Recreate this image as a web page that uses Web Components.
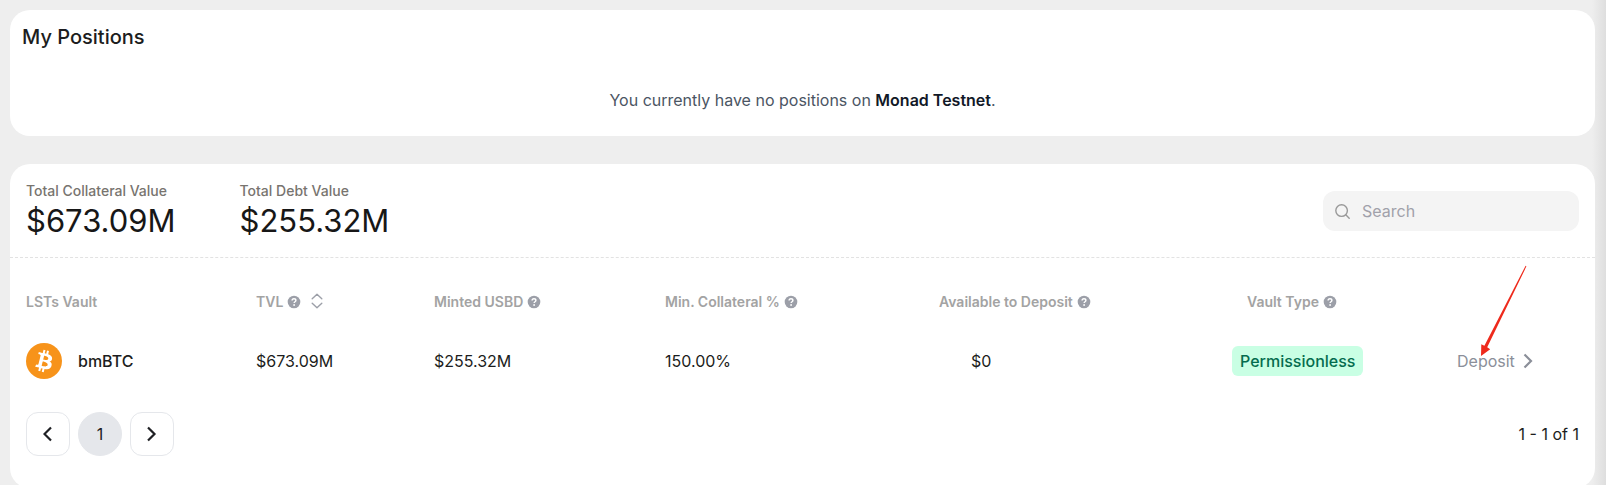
<!DOCTYPE html>
<html lang="en">
<head>
<meta charset="utf-8">
<title>My Positions</title>
<style>
html{background:#eee;scrollbar-width:none}
body{margin:0;font:400 16px/24px Inter,sans-serif;color:#1c1d20}
</style>
</head>
<body>
<vault-page></vault-page>

<script>
const define = (name, html) => {
  const template = document.createElement('template');
  template.innerHTML = html;
  customElements.define(name, class extends HTMLElement {
    constructor() {
      super();
      this.attachShadow({ mode: 'open' }).append(template.content.cloneNode(true));
    }
  });
};

define('surface-card', `
<style>
:host{display:block;background:#fff;border-radius:20px}
</style>
<slot></slot>`);

define('help-icon', `
<style>
:host{display:inline-block;width:14px;height:14px}
svg{display:block}
</style>
<svg width="14" height="14" viewBox="0 0 14 14" aria-hidden="true">
<circle cx="7" cy="7" r="6.3" fill="#9c9fa8"/>
<path d="M5.1 5.6C5.1 4.4 5.9 3.7 7 3.7S8.9 4.4 8.9 5.4C8.9 6.7 7.1 6.7 7.1 8" fill="none" stroke="#fff" stroke-width="1.4"/>
<circle cx="7.1" cy="10" r=".9" fill="#fff"/>
</svg>`);

define('sort-icon', `
<style>
:host{display:inline-block;width:12px;height:16px}
svg{display:block}
</style>
<svg width="12" height="16" viewBox="0 0 12 16" fill="none" stroke="#9c9fa8" stroke-width="1.4" stroke-linecap="round" stroke-linejoin="round" aria-hidden="true">
<path d="M1.2 5.8 6 1.3l4.8 4.5M1.2 10.2 6 14.7l4.8-4.5"/>
</svg>`);

define('column-label', `
<style>
:host{display:inline-flex;align-items:center;gap:4px;font:600 14px/20px Inter,sans-serif;color:#a3a3a3;white-space:nowrap}
</style>
<slot></slot>`);

define('bitcoin-logo', `
<style>
:host{display:block;width:36px;height:36px}
svg{display:block}
</style>
<svg width="36" height="36" viewBox="0 0 32 32" role="img" aria-label="Bitcoin">
<circle cx="16" cy="16" r="16" fill="#f7931a"/>
<path fill="#fff" d="M23.19 14.02c.31-2.1-1.28-3.23-3.47-3.98l.71-2.85-1.73-.43-.69 2.77c-.46-.11-.92-.22-1.39-.33l.7-2.79-1.73-.43-.71 2.84c-.38-.08-.75-.17-1.11-.26l-2.39-.6-.46 1.85s1.28.29 1.26.31c.7.18.83.64.8 1.01l-.8 3.24.18.06-.18-.05-1.13 4.54c-.09.21-.3.53-.79.41.02.02-1.26-.31-1.26-.31l-.86 1.98 2.25.56 1.23.32-.71 2.87 1.72.43.71-2.84c.48.13.93.25 1.38.36l-.71 2.82 1.73.43.71-2.86c2.96.56 5.18.33 6.12-2.34.75-2.15-.04-3.39-1.59-4.2 1.13-.26 1.98-1 2.21-2.53zm-3.96 5.55c-.53 2.16-4.16.99-5.34.7l.95-3.82c1.18.29 4.95.88 4.39 3.12zm.54-5.58c-.49 1.96-3.51.96-4.49.72l.87-3.46c.98.24 4.14.7 3.62 2.74z"/>
</svg>`);

define('metric-total', `
<style>
:host{display:block}
dl{margin:0}
dt{font:500 14px/20px Inter,sans-serif;color:#78746f}
dd{margin:0;font-size:31px;line-height:40px;color:#171717}
</style>
<dl><dt><slot name="label"></slot></dt><dd><slot></slot></dd></dl>`);

define('search-field', `
<style>
:host{display:block;width:256px}
label{display:flex;align-items:center;gap:12px;box-sizing:border-box;height:40px;padding:0 12px;border-radius:12px;background:#f4f4f4}
svg{flex:none}
input{flex:1;min-width:0;border:0;padding:0;background:none;outline:0;font:400 16px/24px Inter,sans-serif;color:#171717}
input::placeholder{color:#a1a1aa;opacity:1}
</style>
<label>
<svg width="15" height="15" viewBox="0 0 15 15" fill="none" stroke="#999" stroke-width="1.4" stroke-linecap="round" aria-hidden="true"><circle cx="6.6" cy="6.6" r="5.8"/><path d="m10.8 10.8 3.4 3.4"/></svg>
<input type="search" placeholder="Search" aria-label="Search">
</label>`);

define('status-badge', `
<style>
:host{display:inline-block;padding:3px 8px;border-radius:6px;background:#c9ffe4;color:#046c4e;font-weight:500}
</style>
<slot></slot>`);

define('pointer-arrow', `
<style>
:host{display:block;width:48px;height:92px;pointer-events:none}
svg{display:block}
</style>
<svg width="48" height="92" viewBox="0 0 48 92" aria-hidden="true">
<path fill="#ee2a1c" d="M46.6.8 47.4 1.3 8.2 82.2 11.2 84.2 2 91 2.3 79.2 5.4 80.7Z"/>
</svg>`);

define('vault-table', `
<style>
:host{display:block}
table{width:100%;table-layout:fixed;border-collapse:collapse}
th,td{padding:0;text-align:left;vertical-align:middle;font-weight:400;white-space:nowrap}
th{height:48px}
td{height:72px}
.free{padding-left:32px}
.type{padding-left:15px}
.vault{display:flex;align-items:center;gap:16px;font-weight:500}
.action{position:relative}
pointer-arrow{position:absolute;right:53px;top:-60px}
a{display:inline-flex;align-items:center;gap:8px;color:#8b8f99;text-decoration:none}
button{display:block;border:0;margin:0 0 0 6px;padding:0;background:none}
</style>
<table>
<colgroup><col style="width:230px"><col style="width:178px"><col style="width:231px"><col style="width:274px"><col style="width:293px"><col style="width:225px"><col style="width:123px"></colgroup>
<thead><tr>
<th scope="col"><column-label>LSTs Vault</column-label></th>
<th scope="col"><column-label>TVL <help-icon></help-icon><button type="button" aria-label="Sort by TVL"><sort-icon></sort-icon></button></column-label></th>
<th scope="col"><column-label>Minted USBD <help-icon></help-icon></column-label></th>
<th scope="col"><column-label>Min. Collateral % <help-icon></help-icon></column-label></th>
<th scope="col"><column-label>Available to Deposit <help-icon></help-icon></column-label></th>
<th scope="col" class="type"><column-label>Vault Type <help-icon></help-icon></column-label></th>
<th></th>
</tr></thead>
<tbody><tr>
<td><div class="vault"><bitcoin-logo></bitcoin-logo>bmBTC</div></td>
<td>$673.09M</td>
<td>$255.32M</td>
<td>150.00%</td>
<td class="free">$0</td>
<td><status-badge>Permissionless</status-badge></td>
<td class="action"><a href="#deposit">Deposit <svg width="10" height="16" viewBox="0 0 10 16" fill="none" stroke="#8b8f99" stroke-width="2.2" aria-hidden="true"><path d="m1.5 1.5 6.5 6.5-6.5 6.5"/></svg></a><pointer-arrow></pointer-arrow></td>
</tr></tbody>
</table>`);

define('page-nav', `
<style>
:host{display:flex;align-items:center;justify-content:space-between}
nav{display:flex;gap:8px}
button{display:grid;place-items:center;box-sizing:border-box;width:44px;height:44px;padding:0;border:1px solid #e5e7eb;border-radius:12px;background:#fff;font:400 16px/24px Inter,sans-serif;color:#1f2024}
button[aria-current]{border-radius:50%;background:#e5e7eb}
</style>
<nav aria-label="Pages">
<button type="button" aria-label="Previous page"><svg width="10" height="16" viewBox="0 0 10 16" fill="none" stroke="#1f2024" stroke-width="2.2" aria-hidden="true"><path d="M8 1.5 1.5 8 8 14.5"/></svg></button>
<button type="button" aria-current="page">1</button>
<button type="button" aria-label="Next page"><svg width="10" height="16" viewBox="0 0 10 16" fill="none" stroke="#1f2024" stroke-width="2.2" aria-hidden="true"><path d="m1 1.5 6.5 6.5L1 14.5"/></svg></button>
</nav>
<span>1 - 1 of 1</span>`);

define('vault-page', `
<style>
:host{display:flex;flex-direction:column;gap:28px;padding:10px 11px 0 10px;background:linear-gradient(to left,#dedede,#eee 14px)}
.positions{padding:15px 12px 24px}
h1{margin:0;font:500 20px/24px Inter,sans-serif}
p{margin:39px 0 0;text-align:center;color:#4b5563}
p strong{font-weight:600;color:#111827}
.totals{display:flex;align-items:center;gap:64px;padding:17px 16px 16px;border-bottom:1px dashed #e2e2e2}
search-field{margin-left:auto}
.list{padding:19px 16px 32px}
page-nav{margin-top:15px}
</style>
<surface-card><section class="positions">
<h1>My Positions</h1>
<p>You currently have no positions on <strong>Monad Testnet</strong>.</p>
</section></surface-card>
<surface-card>
<div class="totals">
<metric-total><span slot="label">Total Collateral Value</span>$673.09M</metric-total>
<metric-total><span slot="label">Total Debt Value</span>$255.32M</metric-total>
<search-field></search-field>
</div>
<div class="list"><vault-table></vault-table><page-nav></page-nav></div>
</surface-card>`);
</script>
</body>
</html>
